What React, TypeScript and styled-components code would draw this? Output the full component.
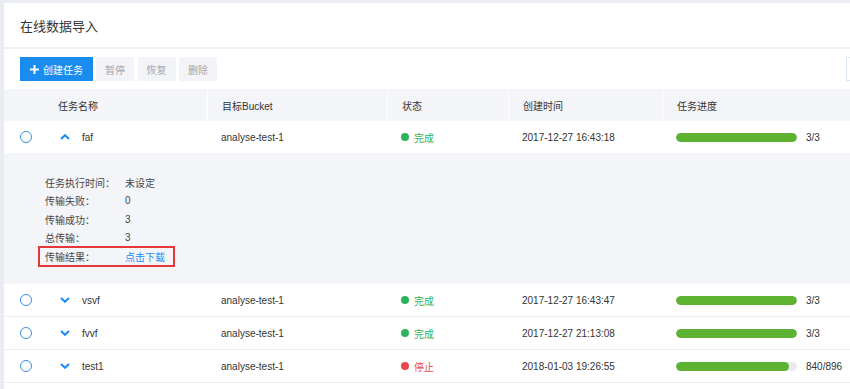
import React from "react";
import styled, { createGlobalStyle } from "styled-components";

const GlobalStyle = createGlobalStyle`
  html, body {
    margin: 0;
    padding: 0;
    background: #e9ecf2;
    overflow: hidden;
  }
  body {
    font-family: "Liberation Sans", "Noto Sans CJK SC", sans-serif;
    font-size: 10px;
    color: #333;
  }
`;

type Task = {
  name: string;
  bucket: string;
  status: "done" | "stop";
  created: string;
  done: number;
  total: number;
  open?: boolean;
};

const tasks: Task[] = [
  { name: "faf", bucket: "analyse-test-1", status: "done", created: "2017-12-27 16:43:18", done: 3, total: 3, open: true },
  { name: "vsvf", bucket: "analyse-test-1", status: "done", created: "2017-12-27 16:43:47", done: 3, total: 3 },
  { name: "fvvf", bucket: "analyse-test-1", status: "done", created: "2017-12-27 21:13:08", done: 3, total: 3 },
  { name: "test1", bucket: "analyse-test-1", status: "stop", created: "2018-01-03 19:26:55", done: 840, total: 896 },
];

const details = [
  { label: "任务执行时间：", value: "未设定" },
  { label: "传输失败：", value: "0" },
  { label: "传输成功：", value: "3" },
  { label: "总传输：", value: "3" },
];

function Chevron({ up }: { up?: boolean }) {
  return (
    <svg width="10" height="6" viewBox="0 0 10 6">
      <path
        d={up ? "M1 5 L5 1.2 L9 5" : "M1 1 L5 4.8 L9 1"}
        fill="none"
        stroke="#1a8cf0"
        strokeWidth="2"
      />
    </svg>
  );
}

export default function App() {
  return (
    <>
      <GlobalStyle />
      <Panel>
        <TitleBar>在线数据导入</TitleBar>
        <Toolbar>
          <CreateButton>
            <svg width="9" height="9" viewBox="0 0 9 9">
              <path d="M4.5 0 V9 M0 4.5 H9" stroke="#fff" strokeWidth="2" />
            </svg>
            创建任务
          </CreateButton>
          <GrayButton>暂停</GrayButton>
          <GrayButton>恢复</GrayButton>
          <GrayButton>删除</GrayButton>
          <SearchBox />
        </Toolbar>
        <HeadRow>
          <HeadCell $first>任务名称</HeadCell>
          <HeadCell>目标Bucket</HeadCell>
          <HeadCell>状态</HeadCell>
          <HeadCell>创建时间</HeadCell>
          <HeadCell>任务进度</HeadCell>
        </HeadRow>
        {tasks.map((t) => (
          <React.Fragment key={t.name}>
            <Row $open={t.open}>
              <NameCell>
                <Radio />
                <Toggle>
                  <Chevron up={t.open} />
                </Toggle>
                {t.name}
              </NameCell>
              <Cell>{t.bucket}</Cell>
              <Cell>
                <Status $stop={t.status === "stop"}>
                  {t.status === "stop" ? "停止" : "完成"}
                </Status>
              </Cell>
              <Cell>{t.created}</Cell>
              <Cell>
                <Track>
                  <Fill style={{ width: `${(t.done / t.total) * 100}%` }} />
                </Track>
                <Count>
                  {t.done}/{t.total}
                </Count>
              </Cell>
            </Row>
            {t.open && (
              <Detail>
                {details.map((d) => (
                  <DetailRow key={d.label}>
                    <DetailLabel>{d.label}</DetailLabel>
                    {d.value}
                  </DetailRow>
                ))}
                <DetailRow $marked>
                  <DetailLabel>传输结果：</DetailLabel>
                  <Link>点击下载</Link>
                </DetailRow>
              </Detail>
            )}
          </React.Fragment>
        ))}
        <Row />
      </Panel>
    </>
  );
}

const Panel = styled.div`
  margin: 3px 0 0 4px;
  background: #fff;
  min-height: 400px;
`;

const TitleBar = styled.div`
  height: 46px;
  padding: 0 0 0 16px;
  box-sizing: border-box;
  display: flex;
  align-items: center;
  font-size: 13px;
  color: #333;
  border-bottom: 2px solid #eef0f4;
`;

const Toolbar = styled.div`
  height: 40px;
  display: flex;
  align-items: center;
  padding-left: 16px;
`;

const CreateButton = styled.button`
  height: 24px;
  width: 73px;
  border: none;
  background: #1a8cf0;
  color: #fff;
  font-family: inherit;
  font-size: 10px;
  display: flex;
  align-items: center;
  justify-content: center;
  gap: 4px;
  padding: 0;
  margin-right: 3px;
`;

const GrayButton = styled.button`
  height: 24px;
  width: 38px;
  border: none;
  background: #f3f4f7;
  color: #a3a6ad;
  font-family: inherit;
  font-size: 10px;
  padding: 0;
  margin-right: 3.5px;
`;

const SearchBox = styled.div`
  margin-left: auto;
  height: 24px;
  width: 200px;
  margin-right: -196px;
  box-sizing: border-box;
  border: 1px solid #dbe7f6;
  background: #fff;
`;

const grid = `
  display: grid;
  grid-template-columns: 203px 180px 121px 154px 1fr;
`;

const HeadRow = styled.div`
  ${grid}
  height: 32px;
  background: #f4f5f9;
`;

const HeadCell = styled.div<{ $first?: boolean }>`
  display: flex;
  align-items: center;
  padding-left: ${(p) => (p.$first ? "54px" : "14px")};
  border-left: ${(p) => (p.$first ? "none" : "1px solid #fff")};
  color: #333;
`;

const Row = styled.div<{ $open?: boolean }>`
  ${grid}
  height: 33px;
  box-sizing: border-box;
  border-bottom: 1px solid ${(p) => (p.$open ? "#f4f5f9" : "#eceef3")};
`;

const Cell = styled.div`
  display: flex;
  align-items: center;
  padding-left: 14px;
`;

const NameCell = styled.div`
  display: flex;
  align-items: center;
  padding-left: 16px;
`;

const Radio = styled.span`
  width: 12px;
  height: 12px;
  box-sizing: border-box;
  border-radius: 50%;
  border: 1.5px solid #3a8ee6;
  margin-right: 28px;
`;

const Toggle = styled.span`
  display: flex;
  width: 22px;
`;

const Status = styled.span<{ $stop?: boolean }>`
  display: flex;
  align-items: center;
  color: ${(p) => (p.$stop ? "#e8494b" : "#2eb35c")};
  &::before {
    content: "";
    width: 8px;
    height: 8px;
    border-radius: 50%;
    margin-right: 5px;
    background: ${(p) => (p.$stop ? "#e8494b" : "#2eb35c")};
  }
`;

const Track = styled.div`
  width: 121px;
  height: 9px;
  border-radius: 5px;
  background: #e8eaf0;
  overflow: hidden;
`;

const Fill = styled.div`
  height: 100%;
  border-radius: 5px;
  background: #5eb232;
`;

const Count = styled.span`
  margin-left: 9px;
`;

const Detail = styled.div`
  background: #f4f5f9;
  height: 130px;
  box-sizing: border-box;
  padding: 19px 0 0 35px;
`;

const DetailRow = styled.div<{ $marked?: boolean }>`
  display: flex;
  align-items: center;
  width: 135px;
  height: 18.5px;
  box-sizing: border-box;
  padding-left: 6px;
  color: #444;
  outline: ${(p) => (p.$marked ? "2px solid #e5383b" : "none")};
  outline-offset: -1px;
`;

const DetailLabel = styled.span`
  width: 80px;
  flex-shrink: 0;
`;

const Link = styled.span`
  color: #1a8cf0;
`;
